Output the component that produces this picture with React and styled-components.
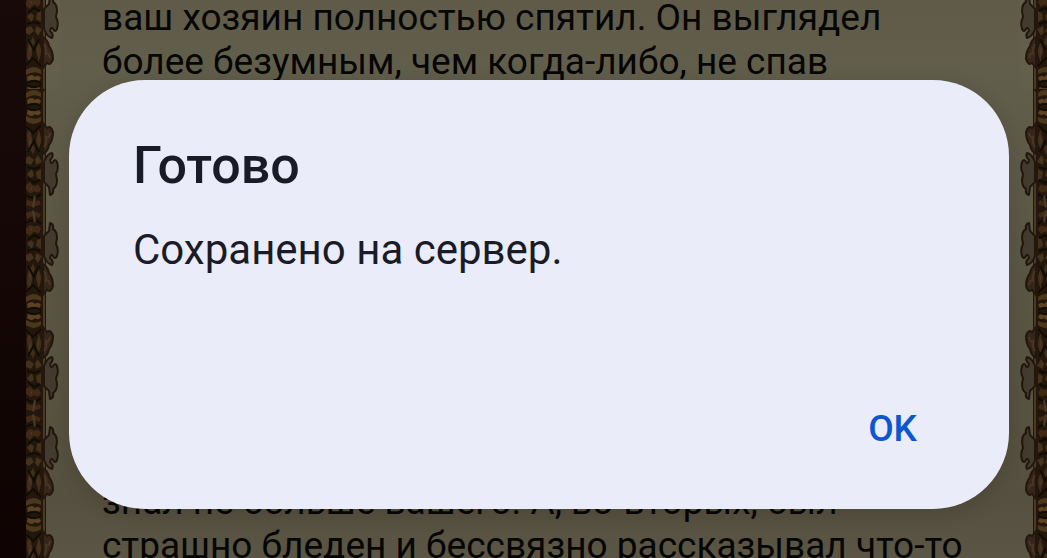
import React from "react";
import styled, { createGlobalStyle } from "styled-components";

const GlobalStyle = createGlobalStyle`
  * { box-sizing: border-box; }
  body { margin: 0; background: #120604; font-family: Roboto, "Noto Sans", sans-serif; }
`;

const Screen = styled.div`
  position: relative;
  display: flex;
  height: 100vh;
  overflow: hidden;
  background: linear-gradient(180deg, #180a08, #0f0303);
`;

const Page = styled.main`
  flex: 1;
  display: flex;
  align-items: stretch;
  margin-left: 26px;
  background: linear-gradient(180deg, #605b49 0%, #625e4c 12%, #5a5644 50%, #55503f 90%, #5a5544 100%);
`;

const Border = styled.svg`
  flex: none;
  width: ${(p) => p.$width}px;
  height: 100%;
`;

const Story = styled.article`
  flex: 1;
  display: grid;
  align-content: start;
  gap: 396px;
  padding-left: 42px;
  margin-top: -4px;
  color: #060604;
  font-size: 37px;
  line-height: 44px;
  white-space: nowrap;
`;

const Passage = styled.p`
  margin: 0;
`;

const Overlay = styled.div`
  position: absolute;
  inset: 0;
  padding: 80px 38px 0 69px;
`;

const Dialog = styled.section`
  display: flex;
  flex-direction: column;
  padding: 56px 64px 30px;
  border-radius: 76px;
  background: #eaecf9;
  color: #191b27;
  box-shadow: 0 4px 20px rgba(20, 16, 6, 0.15);
`;

const Title = styled.h1`
  margin: 0;
  font-size: 52px;
  line-height: 60px;
  font-weight: 500;
`;

const Message = styled.p`
  margin: 28px 0 0;
  font-size: 42px;
  line-height: 52px;
`;

const Actions = styled.div`
  display: flex;
  justify-content: flex-end;
  margin-top: 103px;
`;

const TextButton = styled.button`
  padding: 24px 28px;
  border: 0;
  border-radius: 50px;
  background: transparent;
  color: #0b57d0;
  font: 500 37px/52px Roboto, sans-serif;
  cursor: pointer;
`;

/* Upper half of one carved motif; its mirror image completes the repeat. */
function HalfMotif() {
  return (
    <>
      <path fill="#21160b" d="M0 0H17V102H0Z" />
      <path fill="#463b28" d="M17 0H19V102H17Z" />
      <path fill="#25190e" d="M15 0H17V102H15ZM19 0H20V102H19Z" />
      <path
        fill="#433a2f"
        stroke="#21160d"
        strokeWidth="2"
        strokeLinejoin="round"
        d="M18 27L23 22L24 14Q28 15 27 20Q31 22 31 29L30 35Q33 40 31 47Q29 51 27 47Q25 44 24 49Q28 52 26 56Q21 55 18 47Z"
      />
      <path
        fill="#35261a"
        stroke="#21140b"
        strokeWidth="2"
        d="M17 55Q22 58 23 64Q27 69 27 77Q25 84 21 81L17 86Z"
      />
      <path fill="none" stroke="#483422" strokeWidth="2" d="M18 62Q21 66 20 72Q23 70 24 76" />
      <path fill="#3f2a19" d="M0 4Q7 0 15 5L13 9Q7 5 1 10ZM0 20Q4 13 8 18Q12 14 15 20L12 25Q8 20 4 27L0 24Z" />
      <path fill="#43301b" d="M1 35Q5 28 8 34L6 40ZM11 31L15 29V40L10 37ZM0 46L5 44L8 49L3 53L0 51ZM10 44L16 47L12 54L9 50Z" />
      <path fill="#422e1b" d="M1 75Q1 61 5 57Q8 65 5 76L3 81ZM12 76Q8 68 12 60Q17 66 14 76L12 80ZM7 54L9 60L7 65L5 60Z" />
      <path fill="#4c381c" d="M0 88Q8 82 15 88V92Q8 88 0 93Z" />
      <path fill="#5a4220" d="M1 95Q6 91 9 95Q12 92 15 96L13 99Q7 96 2 100Z" />
      <path
        fill="none"
        stroke="#110a05"
        strokeWidth="2"
        d="M0 14Q8 8 15 15M2 31L8 26L14 29M1 42L8 40L14 42M2 57L8 68L13 57M0 83L7 76L15 84M0 101Q8 97 15 101"
      />
      <path fill="#4b3a25" d="M6 2L8 1L10 12L8 14ZM4 20L6 19V22ZM11 47L13 49L12 51ZM3 64L5 66L4 72ZM12 66L13 70L12 73Z" />
    </>
  );
}

/* The strip is a repeating motif with a shorter first repeat at the top. */
function Ornament({ id, width, flip }) {
  return (
    <Border $width={width} aria-hidden="true">
      <defs>
        <g id={`${id}-half`}>
          <HalfMotif />
        </g>
        <pattern id={id} y="5" width="34" height="204" patternUnits="userSpaceOnUse">
          <use href={`#${id}-half`} />
          <use href={`#${id}-half`} transform="translate(0 204) scale(1 -1)" />
        </pattern>
        <filter id={`${id}-soft`} x="0" y="0" width="1" height="1">
          <feGaussianBlur stdDeviation="0.6" />
        </filter>
      </defs>
      <g
        filter={`url(#${id}-soft)`}
        transform={flip ? "translate(33 0) scale(-1 1)" : undefined}
      >
        <rect width="34" height="100%" fill={`url(#${id})`} />
        <rect y="23" width="34" height="89" fill="#625e4c" transform="translate(0 -23)" />
        <rect y="23" width="34" height="89" fill={`url(#${id})`} transform="translate(0 -23)" />
      </g>
    </Border>
  );
}

export default function App() {
  return (
    <>
      <GlobalStyle />
      <Screen>
        <Page>
          <Ornament id="border-left" width={34} />
          <Story>
            <Passage>
              ваш хозяин полностью спятил. Он выглядел<br />
              более безумным, чем когда-либо, не спав
            </Passage>
            <Passage>
              знал не больше вашего. А, во-вторых, был<br />
              страшно бледен и бессвязно рассказывал что-то
            </Passage>
          </Story>
          <Ornament id="border-right" width={27} flip />
        </Page>
        <Overlay>
          <Dialog role="alertdialog" aria-labelledby="title" aria-describedby="message">
            <Title id="title">Готово</Title>
            <Message id="message">Сохранено на сервер.</Message>
            <Actions>
              <TextButton type="button">OK</TextButton>
            </Actions>
          </Dialog>
        </Overlay>
      </Screen>
    </>
  );
}
